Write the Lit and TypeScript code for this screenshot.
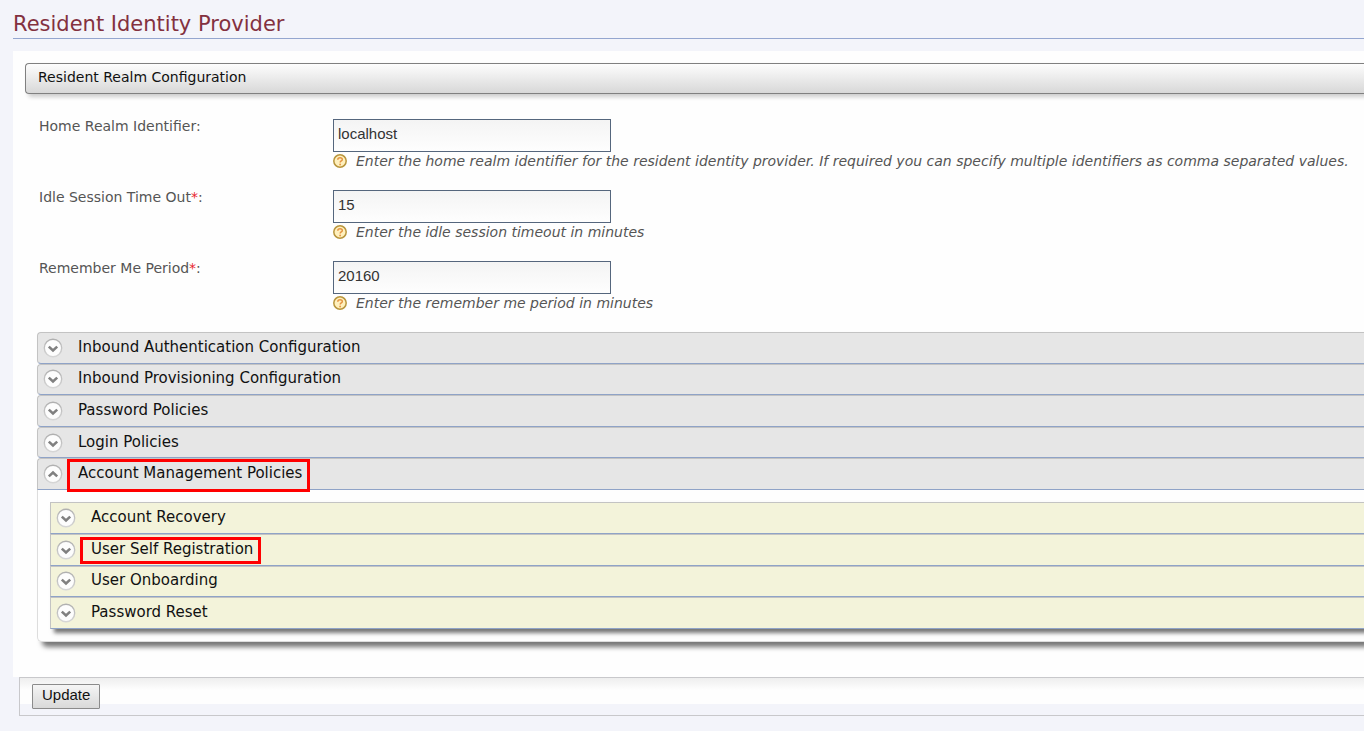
import { LitElement, html, css, svg, nothing } from "lit";
import { customElement, property, state } from "lit/decorators.js";
import { classMap } from "lit/directives/class-map.js";

interface Field {
  id: string;
  label: string;
  required: boolean;
  value: string;
  hint: string;
}

interface Section {
  title: string;
  marked?: boolean;
  children?: Section[];
}

const FIELDS: Field[] = [
  {
    id: "home-realm",
    label: "Home Realm Identifier",
    required: false,
    value: "localhost",
    hint: "Enter the home realm identifier for the resident identity provider. If required you can specify multiple identifiers as comma separated values.",
  },
  {
    id: "idle-timeout",
    label: "Idle Session Time Out",
    required: true,
    value: "15",
    hint: "Enter the idle session timeout in minutes",
  },
  {
    id: "remember-me",
    label: "Remember Me Period",
    required: true,
    value: "20160",
    hint: "Enter the remember me period in minutes",
  },
];

const SECTIONS: Section[] = [
  { title: "Inbound Authentication Configuration" },
  { title: "Inbound Provisioning Configuration" },
  { title: "Password Policies" },
  { title: "Login Policies" },
  {
    title: "Account Management Policies",
    marked: true,
    children: [
      { title: "Account Recovery" },
      { title: "User Self Registration", marked: true },
      { title: "User Onboarding" },
      { title: "Password Reset" },
    ],
  },
];

/** One row of an accordion: round arrow and title. */
@customElement("section-bar")
class SectionBar extends LitElement {
  @property() label = "";
  @property() tone = "grey";
  @property({ type: Boolean }) open = false;
  @property({ type: Boolean }) marked = false;

  static styles = css`
    :host {
      display: grid;
    }
    .bar {
      display: flex;
      align-items: center;
      gap: 15px;
      width: 100%;
      margin: 0;
      padding: 0 5px;
      border: 1px solid #c3c3c3;
      border-right: 0;
      border-bottom-color: #8fa3c7;
      border-radius: 4px 0 0 4px;
      background: #e6e6e6;
      color: #111;
      font: 15px/26px "DejaVu Sans", sans-serif;
      text-align: left;
      cursor: pointer;
    }
    .bar.open {
      border-radius: 4px 0 0 0;
    }
    .bar.cream {
      border-radius: 0;
      background: #f3f3da;
    }
    .icon {
      flex: none;
      width: 20px;
      height: 20px;
    }
    .title {
      position: relative;
      padding-bottom: 2px;
    }
    .frame {
      position: absolute;
      inset: -1px -8px -4px -11px;
      border: 3px solid #f00;
    }
    .cream .frame {
      inset: 1px -8px 0 -11px;
    }
  `;

  render() {
    const arrow = this.open
      ? svg`<path d="M5.8 12.4 10 8.6l4.2 3.8" />`
      : svg`<path d="M5.8 8.6 10 12.4l4.2-3.8" />`;
    return html`
      <button
        type="button"
        aria-expanded=${this.open}
        class=${classMap({ bar: true, open: this.open, cream: this.tone === "cream" })}
      >
        <svg class="icon" viewBox="0 0 20 20" aria-hidden="true">
          <defs>
            <linearGradient id="ring" x1="0" y1="0" x2="0" y2="1">
              <stop offset="0" stop-color="#b0b0b0" />
              <stop offset="1" stop-color="#d6d6d6" />
            </linearGradient>
          </defs>
          <circle cx="10" cy="10" r="8.7" fill="#fdfdfd" stroke="url(#ring)" stroke-width="1.4" />
          <g fill="none" stroke="#808080" stroke-width="2.6">${arrow}</g>
        </svg>
        <span class="title"
          >${this.label}${this.marked ? html`<span class="frame"></span>` : nothing}</span
        >
      </button>
    `;
  }
}

@customElement("app-root")
class AppRoot extends LitElement {
  @state() private opened = new Set<string>(["Account Management Policies"]);

  static styles = css`
    :host {
      display: block;
      box-sizing: border-box;
      min-height: 100vh;
      padding: 8px 0 15px 13px;
      overflow: hidden;
      background: #f3f4fa;
      color: #555;
      font: 14px/20px "DejaVu Sans", sans-serif;
    }
    .heading {
      margin: 0 0 12px;
      padding-top: 2px;
      border-bottom: 1px solid #94a6cf;
      color: #83313f;
      font-size: 21px;
      font-weight: 400;
      line-height: 28px;
    }
    .panel {
      padding: 12px 0 35px 12px;
      background: #fefefe;
    }
    .caption {
      margin: 0;
      padding: 0 12px 3px;
      border: 1px solid #808080;
      border-right: 0;
      border-radius: 4px 0 0 4px;
      background: linear-gradient(#fdfdfd, #d8d8d8);
      box-shadow: 3px 3px 4px #ccc;
      color: #111;
      font-size: 14px;
      font-weight: 400;
      line-height: 26px;
    }
    .fields {
      display: grid;
      gap: 20px;
      padding: 25px 0 20px 14px;
    }
    .field {
      display: grid;
      grid-template-columns: 294px 1fr;
      align-items: start;
    }
    .label {
      line-height: 14px;
    }
    .required {
      color: #e8252f;
    }
    .input {
      display: block;
      box-sizing: border-box;
      width: 278px;
      height: 33px;
      margin: 0;
      padding: 0 4px 4px;
      border: 1px solid #55667d;
      border-radius: 0;
      background: linear-gradient(#f4f4f4, #fefefe);
      color: #333;
      font: 15px "Liberation Sans", sans-serif;
    }
    .hint {
      display: flex;
      align-items: center;
      gap: 8px;
      height: 18px;
      font-style: italic;
      white-space: nowrap;
    }
    .help {
      flex: none;
      width: 15px;
      height: 15px;
    }
    .accordion {
      margin-left: 12px;
      border-radius: 0 0 0 5px;
      box-shadow: 5px 5px 5px #777;
      background: #fefefe;
    }
    .bars {
      display: grid;
      grid-auto-rows: 1fr;
      min-height: 158px;
    }
    .bars.inner {
      min-height: 127px;
      box-shadow: 4px 4px 4px #777;
    }
    .body {
      padding: 12px 0 12px 12px;
      border: solid #ddd;
      border-width: 0 0 1px 1px;
      border-radius: 0 0 0 5px;
    }
    .actions {
      display: flex;
      margin-left: 6px;
      padding: 6px 12px;
      border: 1px solid #c8c8cb;
      border-right: 0;
      background: linear-gradient(#eee, #fefefe 12px, #fefefe 26px, transparent 26px) no-repeat;
    }
    .update {
      box-sizing: border-box;
      height: 25px;
      margin: 0;
      padding: 0 9px 4px;
      border: 1px solid #8b8b8b;
      border-radius: 1px;
      background: linear-gradient(#f5f5f5, #d9d9d9);
      color: #111;
      font: 15px "Liberation Sans", sans-serif;
    }
  `;

  private toggle(title: string) {
    const next = new Set(this.opened);
    if (!next.delete(title)) next.add(title);
    this.opened = next;
  }

  private renderBar(section: Section, tone: string) {
    return html`<section-bar
      .label=${section.title}
      .tone=${tone}
      .open=${this.opened.has(section.title)}
      .marked=${section.marked ?? false}
      @click=${() => this.toggle(section.title)}
    ></section-bar>`;
  }

  private renderField(field: Field) {
    return html`
      <div class="field">
        <label class="label" for=${field.id}
          >${field.label}${field.required ? html`<span class="required">*</span>` : nothing}:</label
        >
        <div>
          <input
            class="input"
            type="text"
            id=${field.id}
            aria-describedby="${field.id}-hint"
            .value=${field.value}
          />
          <div class="hint" id="${field.id}-hint">
            <svg class="help" viewBox="0 0 15 15" aria-hidden="true">
              <circle cx="7" cy="7" r="6.2" fill="#fff0bd" stroke="#b8953c" stroke-width="1.5" />
              <path
                d="M4.8 5.7C4.8 3 9.3 3 9.3 5.4c0 1.6-2.1 1.5-2.1 3.1"
                fill="none"
                stroke="#e59443"
                stroke-width="1.5"
              />
              <circle cx="7.1" cy="10.5" r="0.9" fill="#e59443" />
            </svg>
            <span>${field.hint}</span>
          </div>
        </div>
      </div>
    `;
  }

  render() {
    const expanded = SECTIONS.filter((s) => s.children && this.opened.has(s.title));
    return html`
      <h1 class="heading">Resident Identity Provider</h1>
      <form @submit=${(e: Event) => e.preventDefault()}>
        <div class="panel">
          <h2 class="caption">Resident Realm Configuration</h2>
          <div class="fields">${FIELDS.map((f) => this.renderField(f))}</div>
          <div class="accordion">
            <div class="bars">${SECTIONS.map((s) => this.renderBar(s, "grey"))}</div>
            ${expanded.map(
              (s) => html`<div class="body">
                <div class="bars inner">${s.children!.map((c) => this.renderBar(c, "cream"))}</div>
              </div>`
            )}
          </div>
        </div>
        <div class="actions">
          <button class="update" type="submit">Update</button>
        </div>
      </form>
    `;
  }
}
